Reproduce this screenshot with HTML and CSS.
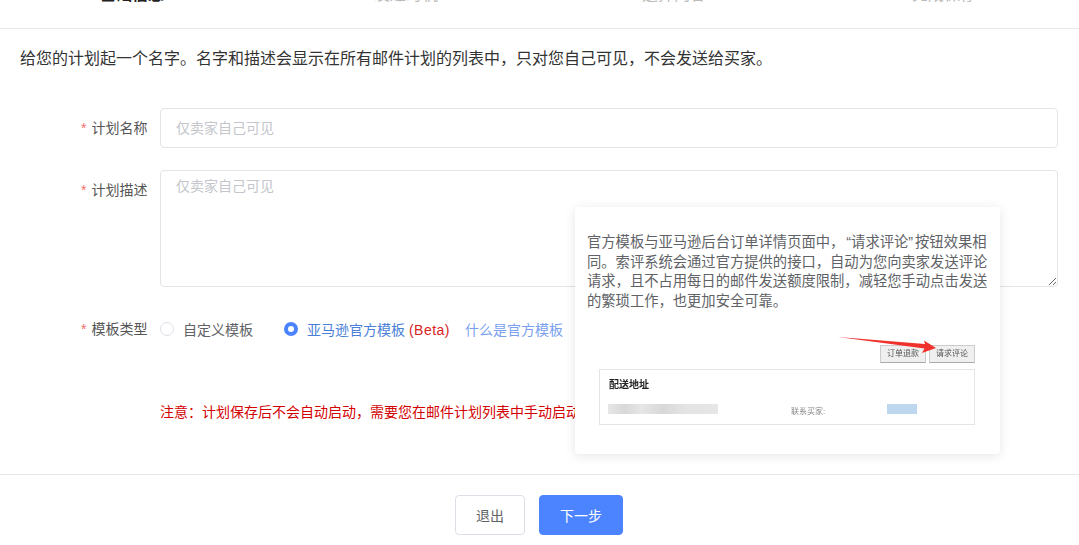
FILE: index.html
```html
<!DOCTYPE html>
<html lang="zh">
<head>
    <meta charset="utf-8">
    <title>新建邮件计划</title>
    <link rel="stylesheet" href="styles.css">
</head>
<body>
<div class="steps">
    <div class="step step-active">基础信息</div>
    <div class="step step-2">发送时机</div>
    <div class="step step-3">选择内容</div>
    <div class="step step-4">完成保存</div>
</div>

<div class="content">
    <p class="intro">给您的计划起一个名字。名字和描述会显示在所有邮件计划的列表中，只对您自己可见，不会发送给买家。</p>

    <div class="form-row row-name">
        <label class="label"><span class="star">*</span>计划名称</label>
        <input class="input" type="text" placeholder="仅卖家自己可见">
    </div>
    <div class="form-row row-desc">
        <label class="label"><span class="star">*</span>计划描述</label>
        <textarea class="textarea" placeholder="仅卖家自己可见"></textarea>
    </div>
    <div class="form-row row-type">
        <label class="label"><span class="star">*</span>模板类型</label>
        <div class="radios">
            <span class="radio"></span>
            <span class="radio-text">自定义模板</span>
            <span class="radio radio-on"></span>
            <span class="radio-text text-blue">亚马逊官方模板 <span class="text-red">(Beta)</span></span>
            <span class="link">什么是官方模板</span>
        </div>
    </div>
    <div class="notice">注意：计划保存后不会自动启动，需要您在邮件计划列表中手动启动</div>
</div>

<div class="footer">
    <button class="btn">退出</button>
    <button class="btn btn-primary">下一步</button>
</div>

<div class="popover">
    <p class="popover-text">官方模板与亚马逊后台订单详情页面中，<span class="quoted">“请求评论”</span>按钮效果相同。索评系统会通过官方提供的接口，自动为您向卖家发送评论请求，且不占用每日的邮件发送额度限制，减轻您手动点击发送的繁琐工作，也更加安全可靠。</p>
    <div class="shot">
        <div class="shot-buttons">
            <span class="shot-btn">订单退款</span>
            <span class="shot-btn">请求评论</span>
        </div>
        <div class="shot-card">
            <div class="shot-title">配送地址</div>
            <div class="shot-line">
                <span class="shot-blur"></span>
                <span class="shot-contact">联系买家:</span>
                <span class="shot-blue"></span>
            </div>
        </div>
        <svg class="shot-arrow" width="100" height="22" viewBox="0 0 100 22">
            <path d="M0 2 L87 9 L86 5.500 L98 13 L84 18 L86.500 13.500 Z" fill="#f0312c"/>
        </svg>
    </div>
</div>
</body>
</html>
```

FILE: styles.css
```css
* {
box-sizing: border-box;
}
body {
margin: 0;
height: 545px;
overflow: hidden;
background: #fff;
color: #555;
font-family: "Liberation Sans", "Noto Sans CJK SC", sans-serif;
font-size: 14px;
display: flex;
flex-direction: column;
position: relative;
}
.steps {
flex: none;
height: 44px;
margin-top: -15px;
padding-left: 100px;
border-bottom: 1px solid #e8e8e8;
display: flex;
color: #bbb;
font-size: 16px;
line-height: 20px;
}
.step-active {
color: #222;
font-weight: bold;
width: 274px;
}
.step-2 {
width: 268px;
}
.step-3 {
width: 270px;
}
.content {
flex: 1;
padding: 20px 21px 0 20px;
}
.intro {
margin: 0;
font-size: 16px;
line-height: 20px;
color: #333;
}
.form-row {
display: flex;
}
.row-name {
margin-top: 39px;
height: 40px;
}
.row-desc {
margin-top: 22px;
height: 117px;
}
.row-type {
margin-top: 32px;
height: 22px;
}
.label {
width: 140px;
padding-left: 61px;
line-height: 40px;
white-space: nowrap;
color: #555;
}
.row-type .label {
line-height: 20px;
}
.star {
color: #f56c6c;
margin-right: 5px;
}
.input, .textarea {
flex: none;
width: 898px;
border: 1px solid #e2e4e8;
border-radius: 4px;
padding: 0 15px;
font-family: inherit;
font-size: 14px;
color: #555;
outline: none;
background: #fff;
}
.input {
height: 40px;
}
.textarea {
height: 117px;
padding-top: 5px;
line-height: 20px;
}
.input::placeholder, .textarea::placeholder {
color: #c4c6cc;
}
.radios {
display: flex;
align-items: center;
height: 20px;
}
.radio {
width: 14px;
height: 14px;
border: 1px solid #dcdfe6;
border-radius: 50%;
background: #fff;
margin-right: 9px;
}
.radio-on {
border: 4px solid #4c84ff;
}
.radio-text {
margin-right: 31px;
color: #606266;
}
.text-blue {
color: #4a7fd8;
margin-right: 15px;
}
.text-red {
color: #d9221c;
letter-spacing: 0.5px;
}
.link {
color: #7a9ff0;
}
.notice {
margin: 61px 0 0 140px;
color: #d40000;
font-size: 14px;
line-height: 20px;
white-space: nowrap;
}
.footer {
flex: none;
height: 71px;
border-top: 1px solid #e8e8e8;
display: flex;
justify-content: center;
gap: 14px;
padding: 20px 1px 0 0;
}
.btn {
width: 70px;
height: 40px;
border: 1px solid #dcdfe6;
border-radius: 4px;
background: #fff;
color: #606266;
font-family: inherit;
font-size: 14px;
}
.btn-primary {
width: 84px;
border-color: #4c84ff;
background: #4c84ff;
color: #fff;
}
.popover {
position: absolute;
left: 575px;
top: 207px;
width: 425px;
height: 247px;
background: #fff;
border-radius: 4px;
box-shadow: 0 2px 12px rgba(0, 0, 0, 0.1);
padding: 26px 10px 0 12px;
}
.popover-text {
margin: 0;
font-size: 14.3px;
line-height: 19.5px;
color: #606266;
}
.quoted {
padding: 0 2px;
}
.shot {
position: relative;
margin: 34px 0 0 12px;
}
.shot-buttons {
display: flex;
justify-content: flex-end;
gap: 3px;
padding-right: 15px;
filter: blur(0.3px);
}
.shot-btn {
width: 46px;
height: 18px;
border: 1px solid #ccc;
border-bottom-color: #aaa;
border-radius: 1px;
background: #efefef;
font-size: 8px;
line-height: 16px;
text-align: center;
color: #555;
}
.shot-card {
width: 376px;
height: 56px;
margin-top: 6px;
border: 1px solid #e4e4e4;
padding: 8px 8px;
}
.shot-title {
margin-left: 1px;
font-size: 10px;
line-height: 14px;
color: #222;
font-weight: bold;
filter: blur(0.3px);
}
.shot-line {
display: flex;
align-items: center;
margin-top: 12px;
height: 10px;
}
.shot-blur {
width: 110px;
height: 10px;
background: linear-gradient(90deg, #e6e6e6, #d8d8d8 15%, #e6e6e6 30%, #d8d8d8 50%, #e4e4e4 70%, #e6e6e6);
}
.shot-contact {
margin: 6px 0 0 73px;
width: 96px;
font-size: 8px;
line-height: 10px;
color: #888;
filter: blur(0.3px);
}
.shot-blue {
width: 30px;
height: 10px;
background: #bed6ee;
}
.shot-arrow {
position: absolute;
left: 239px;
top: -10px;
}
```
